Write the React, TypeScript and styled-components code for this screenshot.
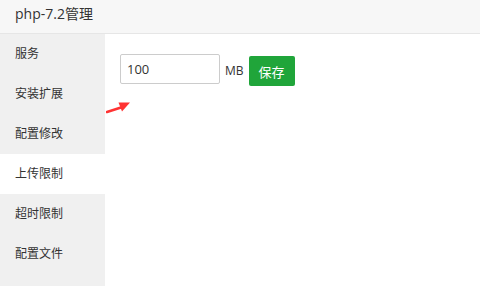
import styled, { createGlobalStyle } from "styled-components";

const menu: string[] = ["服务", "安装扩展", "配置修改", "上传限制", "超时限制", "配置文件"];
const active = 3;

const GlobalStyle = createGlobalStyle`
  html, body {
    margin: 0;
    padding: 0;
    background: #fff;
    font-family: "Open Sans", "Noto Sans", "Noto Sans CJK SC", sans-serif;
    color: #333;
  }
`;

export default function App() {
  return (
    <Page>
      <GlobalStyle />
      <Header>php-7.2管理</Header>
      <Body>
        <Sidebar>
          {menu.map((item: string, i: number) => (
            <MenuItem key={item} $active={i === active}>
              {item}
            </MenuItem>
          ))}
        </Sidebar>
        <Content>
          <Row>
            <Input defaultValue="100" />
            <Unit>MB</Unit>
            <SaveButton>保存</SaveButton>
          </Row>
          <Arrow width="28" height="14" viewBox="0 0 28 14">
            <path d="M1 12 L15 7.5" stroke="#f33" strokeWidth="2.6" strokeLinecap="round" />
            <polygon points="12.5,2.5 24,2.5 16,11.5" fill="#f33" />
          </Arrow>
        </Content>
      </Body>
    </Page>
  );
}

const Page = styled.div`
  width: 480px;
  height: 286px;
  display: flex;
  flex-direction: column;
  overflow: hidden;
`;
const Header = styled.div`
  height: 33px;
  line-height: 28px;
  padding-left: 15px;
  font-size: 14px;
  background: #f7f7f7;
  border-bottom: 1px solid #e6e6e6;
  flex-shrink: 0;
`;
const Body = styled.div`
  flex: 1;
  display: flex;
`;
const Sidebar = styled.ul`
  width: 105px;
  margin: 0;
  padding: 0;
  list-style: none;
  background: #f0f0f0;
`;
const MenuItem = styled.li<{ $active?: boolean }>`
  height: 40px;
  line-height: 40px;
  padding-left: 15px;
  font-size: 12px;
  color: #333;
  background: ${(p) => (p.$active ? "#fff" : "transparent")};
`;
const Content = styled.div`
  position: relative;
  flex: 1;
  padding: 20px 15px;
`;
const Row = styled.div`
  display: flex;
  align-items: flex-start;
`;
const Input = styled.input`
  box-sizing: border-box;
  width: 100px;
  height: 30px;
  padding: 0 6px;
  border: 1px solid #ccc;
  border-radius: 2px;
  font-family: inherit;
  font-size: 13px;
  color: #333;
  outline: none;
`;
const Unit = styled.span`
  margin: 0 5px 0 5px;
  line-height: 33px;
  font-size: 12px;
  color: #333;
`;
const SaveButton = styled.button`
  margin-top: 2px;
  width: 46px;
  height: 30px;
  padding: 0;
  border: none;
  border-radius: 2px;
  background: #20a53a;
  color: #fff;
  font-family: inherit;
  font-size: 13px;
`;
const Arrow = styled.svg`
  position: absolute;
  left: 1px;
  top: 66px;
`;
